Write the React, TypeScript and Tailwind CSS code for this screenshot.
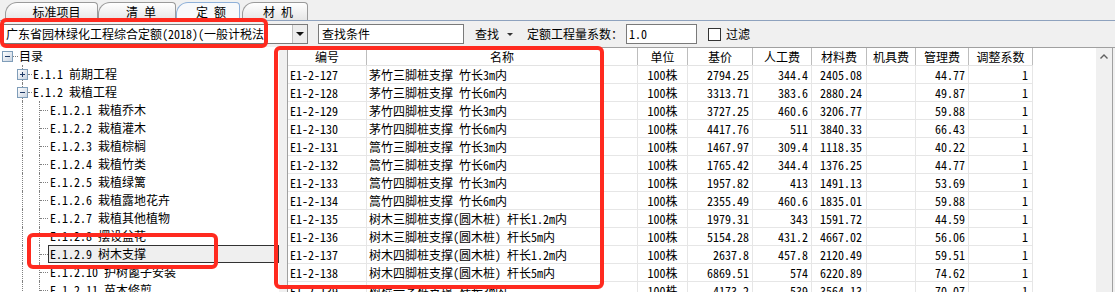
import React from "react";

const FONT = "font-['Noto_Sans_Mono_CJK_SC','Noto_Sans_CJK_SC',monospace]";

type Row = {
  code: string;
  name: string;
  unit: string;
  base: string;
  labor: string;
  mat: string;
  mach: string;
  mgmt: string;
  adj: string;
};

const rows: Row[] = [
  { code: "E1-2-127", name: "茅竹三脚桩支撑 竹长3m内", unit: "100株", base: "2794.25", labor: "344.4", mat: "2405.08", mach: "", mgmt: "44.77", adj: "1" },
  { code: "E1-2-128", name: "茅竹三脚桩支撑 竹长6m内", unit: "100株", base: "3313.71", labor: "383.6", mat: "2880.24", mach: "", mgmt: "49.87", adj: "1" },
  { code: "E1-2-129", name: "茅竹四脚桩支撑 竹长3m内", unit: "100株", base: "3727.25", labor: "460.6", mat: "3206.77", mach: "", mgmt: "59.88", adj: "1" },
  { code: "E1-2-130", name: "茅竹四脚桩支撑 竹长6m内", unit: "100株", base: "4417.76", labor: "511", mat: "3840.33", mach: "", mgmt: "66.43", adj: "1" },
  { code: "E1-2-131", name: "篙竹三脚桩支撑 竹长3m内", unit: "100株", base: "1467.97", labor: "309.4", mat: "1118.35", mach: "", mgmt: "40.22", adj: "1" },
  { code: "E1-2-132", name: "篙竹三脚桩支撑 竹长6m内", unit: "100株", base: "1765.42", labor: "344.4", mat: "1376.25", mach: "", mgmt: "44.77", adj: "1" },
  { code: "E1-2-133", name: "篙竹四脚桩支撑 竹长3m内", unit: "100株", base: "1957.82", labor: "413", mat: "1491.13", mach: "", mgmt: "53.69", adj: "1" },
  { code: "E1-2-134", name: "篙竹四脚桩支撑 竹长6m内", unit: "100株", base: "2355.49", labor: "460.6", mat: "1835.01", mach: "", mgmt: "59.88", adj: "1" },
  { code: "E1-2-135", name: "树木三脚桩支撑(圆木桩) 杆长1.2m内", unit: "100株", base: "1979.31", labor: "343", mat: "1591.72", mach: "", mgmt: "44.59", adj: "1" },
  { code: "E1-2-136", name: "树木三脚桩支撑(圆木桩) 杆长5m内", unit: "100株", base: "5154.28", labor: "431.2", mat: "4667.02", mach: "", mgmt: "56.06", adj: "1" },
  { code: "E1-2-137", name: "树木四脚桩支撑(圆木桩) 杆长1.2m内", unit: "100株", base: "2637.8", labor: "457.8", mat: "2120.49", mach: "", mgmt: "59.51", adj: "1" },
  { code: "E1-2-138", name: "树木四脚桩支撑(圆木桩) 杆长5m内", unit: "100株", base: "6869.51", labor: "574", mat: "6220.89", mach: "", mgmt: "74.62", adj: "1" },
  { code: "E1-2-139", name: "树棍一字桩支撑 杆长3m内", unit: "100株", base: "4173.2", labor: "539", mat: "3564.13", mach: "", mgmt: "70.07", adj: "1" },
];

const children = [
  "E.1.2.1 栽植乔木",
  "E.1.2.2 栽植灌木",
  "E.1.2.3 栽植棕榈",
  "E.1.2.4 栽植竹类",
  "E.1.2.5 栽植绿篱",
  "E.1.2.6 栽植露地花卉",
  "E.1.2.7 栽植其他植物",
  "E.1.2.8 摆设盆花",
  "E.1.2.9 树木支撑",
  "E.1.2.10 护树篦子安装",
  "E.1.2.11 苗木修剪",
];

function Box({ plus }: { plus?: boolean }) {
  return (
    <div className="relative w-[11px] h-[11px] shrink-0 border border-[#7F9DB9] bg-linear-to-br from-white to-[#C9D3E0] flex items-center justify-center">
      <div className="w-[5px] h-[1px] bg-[#1F3A66]" />
      {plus && <div className="absolute w-[1px] h-[5px] bg-[#1F3A66]" />}
    </div>
  );
}

function Tab({ label, active, cls }: { label: string; active?: boolean; cls: string }) {
  return (
    <div
      className={
        "h-[18px] flex items-center justify-center border border-b-0 rounded-tl-[12px] rounded-tr-[4px] text-[12px] leading-none " +
        cls +
        (active
          ? " border-[#8FB0D8] bg-[#F8F9FB] mb-[-1px] h-[19px]"
          : " border-[#9A9A9A] bg-linear-to-b from-white to-[#E6E6E6]")
      }
    >
      {label}
    </div>
  );
}

export default function App() {
  return (
    <div className={"relative w-[1115px] h-[292px] overflow-hidden bg-[#F0F0F0] text-black text-[12px] " + FONT}>
      {/* Tabs */}
      <div className="flex items-end h-[21px] border-b border-[#8EA2BE] pl-[5px]">
        <Tab label="标准项目" cls="w-[93px] pl-[10px]" />
        <Tab label="清 单" cls="w-[78px] pl-[8px]" />
        <Tab label="定 额" active cls="w-[64px] pl-[6px]" />
        <Tab label="材 机" cls="ml-[2px] w-[66px] pl-[6px]" />
      </div>

      {/* Toolbar */}
      <div className="flex items-center h-[26px]">
        <div className="ml-[1px] w-[307px] h-[20px] border border-[#7A7A7A] bg-white flex">
          <div className="flex-1 pl-[4px] overflow-hidden whitespace-nowrap leading-[18px]">
            广东省园林绿化工程综合定额(2018)(一般计税法
          </div>
          <div className="w-[15px] h-full bg-[#EDEDED] border-l border-[#C0C0C0] flex items-center justify-center">
            <div className="w-0 h-0 border-l-[4px] border-r-[4px] border-t-[4px] border-l-transparent border-r-transparent border-t-[#111]" />
          </div>
        </div>
        <div className="ml-[10px] w-[146px] h-[20px] border border-[#7A7A7A] bg-white pl-[3px] leading-[18px]">
          查找条件
        </div>
        <div className="ml-[11px] leading-[18px]">查找</div>
        <div className="ml-[8px] w-0 h-0 border-l-[3px] border-r-[3px] border-t-[3px] border-l-transparent border-r-transparent border-t-[#333]" />
        <div className="ml-[14px] leading-[18px]">定额工程量系数：</div>
        <div className="ml-[3px] w-[71px] h-[20px] border border-[#7A7A7A] bg-white pl-[2px] leading-[18px]">
          1.0
        </div>
        <div className="ml-[11px] w-[13px] h-[13px] border border-[#333] bg-white" />
        <div className="ml-[5px] leading-[18px]">过滤</div>
      </div>

      {/* Main */}
      <div className="flex h-[245px]">
        {/* Tree */}
        <div className="w-[279px] h-full bg-white overflow-hidden leading-[18px]">
          <div className="flex h-[18px] items-center">
            <div className="w-[2px]" />
            <Box />
            <div className="w-[5px] border-t border-dotted border-[#808080]" />
            <span className="ml-[1px]">目录</span>
          </div>
          {[
            { t: "E.1.1 前期工程", plus: true },
            { t: "E.1.2 栽植工程", plus: false },
          ].map((r) => (
            <div key={r.t} className="flex h-[18px]">
              <div className="w-[17px]" />
              <div className="w-[11px] flex flex-col items-center">
                <div className="flex-1 border-l border-dotted border-[#808080]" />
                <Box plus={r.plus} />
                <div className="flex-1 border-l border-dotted border-[#808080]" />
              </div>
              <div className="w-[4px] self-center border-t border-dotted border-[#808080]" />
              <span className="ml-[1px] whitespace-pre">{r.t}</span>
            </div>
          ))}
          {children.map((c, i) => {
            const sel = i === 8;
            return (
              <div key={c} className="flex h-[18px]">
                <div className="w-[22px]" />
                <div className="w-[17px] border-l border-dotted border-[#808080]" />
                <div className="w-[9px] border-l border-dotted border-[#808080] flex items-center">
                  <div className="w-full border-t border-dotted border-[#808080]" />
                </div>
                <div
                  className={
                    "flex-1 whitespace-pre leading-[16px] " +
                    (sel ? "border border-[#333] bg-[#EFEFEF] pl-[1px]" : "pl-[2px] pt-[1px]")
                  }
                >
                  {c}
                </div>
              </div>
            );
          })}
        </div>

        {/* Grid */}
        <div className="flex-1 flex h-full border-t border-[#A0A0A0]">
          <div className="w-[9px] h-full bg-[#F0F0F0] border-r border-[#A0A0A0]" />
          <div className="w-[745px] h-full bg-white overflow-hidden leading-[17px]">
            <div className="flex h-[18px] border-b border-[#E3E3E3]">
              {[
                ["编号", "w-[79px]"],
                ["名称", "w-[271px]"],
                ["单位", "w-[50px]"],
                ["基价", "w-[65px]"],
                ["人工费", "w-[59px]"],
                ["材料费", "w-[55px]"],
                ["机具费", "w-[49px]"],
                ["管理费", "w-[53px]"],
                ["调整系数", "w-[64px]"],
              ].map(([t, w]) => (
                <div key={t} className={w + " h-full text-center border-r border-[#BDBDBD]"}>
                  {t}
                </div>
              ))}
            </div>
            {rows.map((r) => (
              <div key={r.code} className="flex h-[18px]">
                <div className="w-[79px] h-full border-r border-b border-[#E6E6E6] pl-[2px] whitespace-pre">{r.code}</div>
                <div className="w-[271px] h-full border-r border-b border-[#E6E6E6] pl-[2px] whitespace-pre overflow-hidden">{r.name}</div>
                <div className="w-[50px] h-full border-r border-b border-[#E6E6E6] text-center">{r.unit}</div>
                <div className="w-[65px] h-full border-r border-b border-[#E6E6E6] text-right pr-[3px]">{r.base}</div>
                <div className="w-[59px] h-full border-r border-b border-[#E6E6E6] text-right pr-[3px]">{r.labor}</div>
                <div className="w-[55px] h-full border-r border-b border-[#E6E6E6] text-right pr-[4px]">{r.mat}</div>
                <div className="w-[49px] h-full border-r border-b border-[#E6E6E6] text-right pr-[3px]">{r.mach}</div>
                <div className="w-[53px] h-full border-r border-b border-[#E6E6E6] text-right pr-[3px]">{r.mgmt}</div>
                <div className="w-[64px] h-full border-r border-b border-[#E6E6E6] text-right pr-[4px]">{r.adj}</div>
              </div>
            ))}
          </div>
          <div className="w-[63px] h-full bg-white" />
          <div className="w-[16px] h-full bg-[#F0F0F0] flex justify-center pt-[6px]">
            <svg width="8" height="5" viewBox="0 0 8 5">
              <path d="M0.5 4.5 L4 1 L7.5 4.5" fill="none" stroke="#606060" strokeWidth="1.4" />
            </svg>
          </div>
          <div className="w-[1px] h-full bg-[#A0A0A0]" />
          <div className="w-[2px] h-full bg-[#F0F0F0]" />
        </div>
      </div>

      {/* Red annotation boxes */}
      <div className="absolute left-0 top-[18px] w-[268px] h-[30px] border-4 border-[#FF2A1F] rounded-[6px]" />
      <div className="absolute left-[274px] top-[46px] w-[330px] h-[243px] border-4 border-[#FF2A1F] rounded-[6px]" />
      <div className="absolute left-[27px] top-[233px] w-[191px] h-[36px] border-4 border-[#FF2A1F] rounded-[6px]" />
    </div>
  );
}
